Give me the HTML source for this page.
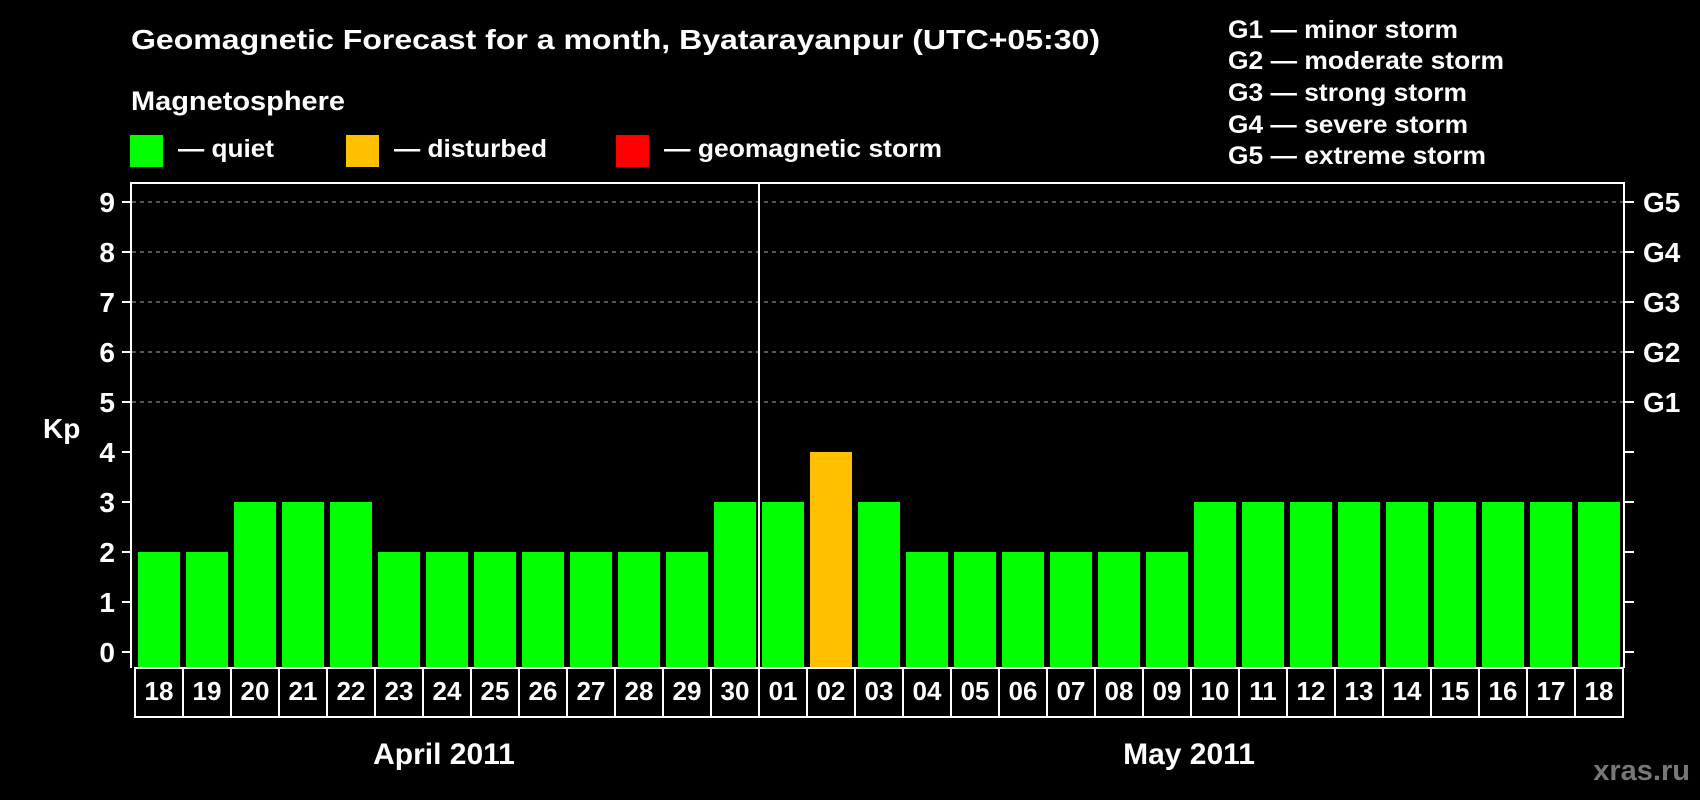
<!DOCTYPE html>
<html><head><meta charset="utf-8"><style>
html,body{margin:0;padding:0;background:#000;}
svg{display:block;}
text{font-family:"Liberation Sans",Arial,sans-serif;font-weight:bold;fill:#fff;}
</style></head><body>
<svg width="1700" height="800" viewBox="0 0 1700 800" xmlns="http://www.w3.org/2000/svg">
<rect width="1700" height="800" fill="#000"/>
<text x="131" y="49" font-size="28" textLength="969" lengthAdjust="spacingAndGlyphs">Geomagnetic Forecast for a month, Byatarayanpur (UTC+05:30)</text>
<text x="131" y="110" font-size="27" textLength="214" lengthAdjust="spacingAndGlyphs">Magnetosphere</text>
<rect x="130" y="135" width="33" height="32" fill="#00ff00"/>
<text x="178" y="157" font-size="25" textLength="96" lengthAdjust="spacingAndGlyphs">— quiet</text>
<rect x="346" y="135" width="33" height="32" fill="#ffc000"/>
<text x="394" y="157" font-size="25" textLength="153" lengthAdjust="spacingAndGlyphs">— disturbed</text>
<rect x="616" y="135" width="33" height="32" fill="#ff0000"/>
<text x="664" y="157" font-size="25" textLength="278" lengthAdjust="spacingAndGlyphs">— geomagnetic storm</text>
<g font-size="25">
<text x="1228" y="38" textLength="230" lengthAdjust="spacingAndGlyphs">G1 — minor storm</text>
<text x="1228" y="69" textLength="276" lengthAdjust="spacingAndGlyphs">G2 — moderate storm</text>
<text x="1228" y="101" textLength="239" lengthAdjust="spacingAndGlyphs">G3 — strong storm</text>
<text x="1228" y="133" textLength="240" lengthAdjust="spacingAndGlyphs">G4 — severe storm</text>
<text x="1228" y="164" textLength="258" lengthAdjust="spacingAndGlyphs">G5 — extreme storm</text>
</g>
<g stroke="#888" stroke-width="1.3" stroke-dasharray="4,4">
<line x1="132" y1="202" x2="1623" y2="202"/>
<line x1="132" y1="252" x2="1623" y2="252"/>
<line x1="132" y1="302" x2="1623" y2="302"/>
<line x1="132" y1="352" x2="1623" y2="352"/>
<line x1="132" y1="402" x2="1623" y2="402"/>
</g>
<g id="bars"></g>
<g stroke="#fff" stroke-width="2" fill="none">
<polyline points="131,668 131,183 1624,183 1624,668"/>
<line x1="759" y1="183" x2="759" y2="668"/>
<rect x="135" y="668" width="1488" height="49"/>
</g>
<g id="ticks" stroke="#fff" stroke-width="2"></g>
<g id="labels"></g>
<text x="43" y="438" font-size="28">Kp</text>
<g font-size="28">
<text x="1643" y="212">G5</text>
<text x="1643" y="262">G4</text>
<text x="1643" y="312">G3</text>
<text x="1643" y="362">G2</text>
<text x="1643" y="412">G1</text>
</g>
<text x="444" y="764" font-size="30" text-anchor="middle">April 2011</text>
<text x="1189" y="764" font-size="30" text-anchor="middle">May 2011</text>
<text x="1690" y="780" font-size="29" text-anchor="end" style="fill:#777">xras.ru</text>
<script>
var NS="http://www.w3.org/2000/svg";
var vals=[2,2,3,3,3,2,2,2,2,2,2,2,3,3,4,3,2,2,2,2,2,2,3,3,3,3,3,3,3,3,3];
var days=["18","19","20","21","22","23","24","25","26","27","28","29","30","01","02","03","04","05","06","07","08","09","10","11","12","13","14","15","16","17","18"];
var bars=document.getElementById("bars"),lab=document.getElementById("labels"),tk=document.getElementById("ticks");
function el(t,a,p,txt){var e=document.createElementNS(NS,t);for(var k in a)e.setAttribute(k,a[k]);if(txt)e.textContent=txt;p.appendChild(e);return e;}
for(var i=0;i<31;i++){
 var x=138+i*48,v=vals[i],y=652-v*50;
 el("rect",{x:x,y:y,width:42,height:668-y,fill:v>=4?"#ffc000":"#00ff00"},bars);
 if(i>0)el("line",{x1:135+i*48,y1:668,x2:135+i*48,y2:717,stroke:"#fff","stroke-width":2},tk);
 el("text",{x:159+i*48,y:700,"font-size":26,"text-anchor":"middle"},lab,days[i]);
}
for(var k=0;k<=9;k++){
 var y=652-k*50;
 el("line",{x1:122,y1:y,x2:131,y2:y},tk);
 el("line",{x1:1624,y1:y,x2:1634,y2:y},tk);
 el("text",{x:115,y:y+10,"font-size":28,"text-anchor":"end"},lab,String(k));
}
</script>
</svg>
</body></html>
